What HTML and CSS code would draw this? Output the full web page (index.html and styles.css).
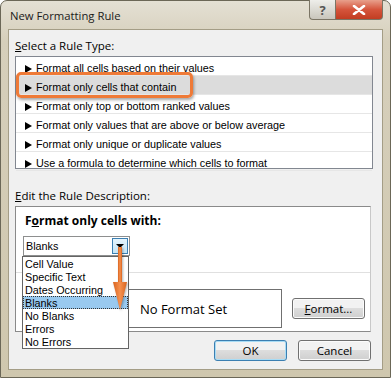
FILE: index.html
```html
<!DOCTYPE html>
<html lang="en">
<head>
    <meta charset="UTF-8">
    <title>New Formatting Rule</title>
    <link rel="stylesheet" href="styles.css">
</head>
<body>
    <div class="window">
        <div class="titlebar">
            <span class="title">New Formatting Rule</span>
            <div class="caption-btns">
                <span class="cap help">?</span>
                <span class="cap close">
                    <svg width="14" height="10" viewBox="0 0 14 10">
                        <path d="M2 1 L12 9 M12 1 L2 9" stroke="#fff" stroke-width="2.6" stroke-linecap="round"/>
                    </svg>
                </span>
            </div>
        </div>

        <div class="client">
            <div class="label"><u>S</u>elect a Rule Type:</div>
            <div class="rules">
                <div class="rule">Format all cells based on their values</div>
                <div class="rule selected">Format only cells that contain</div>
                <div class="rule">Format only top or bottom ranked values</div>
                <div class="rule">Format only values that are above or below average</div>
                <div class="rule">Format only unique or duplicate values</div>
                <div class="rule">Use a formula to determine which cells to format</div>
                <div class="callout"></div>
            </div>

            <div class="label label-gap"><u>E</u>dit the Rule Description:</div>
            <div class="desc">
                <div class="desc-top">
                    <div class="desc-title">F<u>o</u>rmat only cells with:</div>
                    <div class="combo">
                        <span>Blanks</span>
                        <span class="combo-btn"></span>
                    </div>
                </div>
                <div class="desc-bottom">
                    <div class="preview">No Format Set</div>
                    <button class="btn fmt"><u>F</u>ormat...</button>
                </div>

                <div class="popup">
                    <div class="opt">Cell Value</div>
                    <div class="opt">Specific Text</div>
                    <div class="opt">Dates Occurring</div>
                    <div class="opt active">Blanks</div>
                    <div class="opt">No Blanks</div>
                    <div class="opt">Errors</div>
                    <div class="opt">No Errors</div>
                </div>

                <svg class="arrow" width="20" height="76" viewBox="0 0 20 76">
                    <defs>
                        <linearGradient id="ar" x1="0" x2="1" y1="0" y2="0">
                            <stop offset="0" stop-color="#d9641f"/>
                            <stop offset="0.5" stop-color="#f6914f"/>
                            <stop offset="1" stop-color="#d9641f"/>
                        </linearGradient>
                    </defs>
                    <rect x="8" y="8" width="4" height="38" fill="url(#ar)"/>
                    <polygon points="3,43 17,43 10,71" fill="url(#ar)"/>
                </svg>
            </div>

            <div class="actions">
                <button class="btn ok">OK</button>
                <button class="btn">Cancel</button>
            </div>
        </div>
    </div>
</body>
</html>
```

FILE: styles.css
```css
body {
    margin: 0;
    background: #fff;
    font-family: 'Open Sans', 'Noto Sans', sans-serif;
    font-size: 11.5px;
    color: #000;
}
.window {
    width: 391px;
    height: 378px;
    box-sizing: border-box;
    border: 1px solid #6b6757;
    border-radius: 7px 7px 0 0;
    background: linear-gradient(#e4e0d4, #d6cfbb 40px, #cfc7ae);
    display: flex;
    flex-direction: column;
}
.titlebar {
    height: 29px;
    display: flex;
    justify-content: space-between;
    align-items: flex-start;
    padding: 0 7px 0 9px;
}
.title {
    margin-top: 6px;
    font-size: 11.3px;
    line-height: 18px;
    color: #1a1a1a;
}
.caption-btns {
    display: flex;
    margin-top: -1px;
}
.cap {
    height: 19px;
    display: flex;
    align-items: center;
    justify-content: center;
    border: 1px solid #7b7565;
    border-top: none;
}
.help {
    width: 25px;
    border-radius: 0 0 0 4px;
    background: linear-gradient(#eeeeea, #c9c6bc);
    color: #555;
    font-weight: bold;
    font-size: 13px;
    border-right: none;
}
.close {
    width: 46px;
    border-radius: 0 0 4px 0;
    background: linear-gradient(#e8a08c, #d5553c 50%, #c23d22);
}
.client {
    flex: 1;
    margin: 0 7px 7px 7px;
    border: 1px solid #a49d86;
    background: #f0f0f0;
    padding: 0 11px 8px 6px;
}
.label {
    margin-top: 8px;
    line-height: 16px;
}
.label-gap {
    margin-top: 19px;
}
.rules {
    position: relative;
    margin-top: 2px;
    margin-right: -2px;
    height: 113px;
    box-sizing: border-box;
    border: 1px solid #828790;
    background: #fff;
    font-family: 'Liberation Sans', Arial, sans-serif;
    font-size: 10.8px;
}
.rule {
    height: 18px;
    line-height: 23px;
    border-bottom: 1px solid #e6e6e6;
    padding-left: 20px;
    position: relative;
}
.rule::before {
    content: "";
    position: absolute;
    left: 9px;
    top: 8px;
    border-left: 7px solid #000;
    border-top: 4px solid transparent;
    border-bottom: 4px solid transparent;
}
.rule:last-of-type {
    border-bottom: none;
}
.rule.selected {
    background: #dcdcdc;
}
.callout {
    position: absolute;
    left: 0;
    top: 15px;
    width: 171px;
    height: 20px;
    border: 3px solid #ef7a37;
    border-radius: 5px;
    box-shadow: 1px 2px 3px rgba(0, 0, 0, 0.35);
}
.desc {
    position: relative;
    margin-top: 2px;
    height: 126px;
    box-sizing: border-box;
    border: 1px solid #8a8a8a;
    border-right-color: #c8c8c8;
    background: #fff;
}
.desc-top {
    height: 66px;
    border-bottom: 1px solid #e0e0e0;
    padding: 6px 0 0 7px;
    box-sizing: border-box;
}
.desc-title {
    font-weight: bold;
    font-size: 12px;
    line-height: 16px;
    padding-left: 2px;
}
.combo {
    margin-top: 7px;
    width: 107px;
    height: 20px;
    box-sizing: border-box;
    border: 1px solid #8e8f8f;
    display: flex;
    justify-content: space-between;
    align-items: center;
    padding: 0 1px 0 2px;
    font-family: 'Liberation Sans', Arial, sans-serif;
    font-size: 10.8px;
}
.combo-btn {
    width: 16px;
    height: 16px;
    box-sizing: border-box;
    border: 1px solid #3c7fb1;
    background: linear-gradient(#e5f4fc, #c4e5f6);
    position: relative;
}
.combo-btn::after {
    content: "";
    position: absolute;
    left: 3px;
    top: 5px;
    border-top: 4px solid #000;
    border-left: 4px solid transparent;
    border-right: 4px solid transparent;
}
.desc-bottom {
    display: flex;
    align-items: center;
    padding: 16px 0 0 69px;
}
.preview {
    width: 197px;
    height: 39px;
    box-sizing: border-box;
    border: 1px solid #707070;
    display: flex;
    align-items: center;
    justify-content: center;
    font-size: 13px;
}
.btn {
    font-family: 'Open Sans', 'Noto Sans', sans-serif;
    font-size: 11.5px;
    color: #000;
    width: 73px;
    height: 21px;
    padding: 0;
    border: 1px solid #707070;
    border-radius: 3px;
    background: linear-gradient(#f2f2f2 45%, #dddddd 50%, #cfcfcf);
    box-shadow: inset 0 0 0 1px #fbfbfb;
}
.fmt {
    margin-left: 10px;
}
.popup {
    position: absolute;
    left: 6px;
    top: 49px;
    width: 107px;
    box-sizing: border-box;
    border: 1px solid #646464;
    background: #fff;
    font-family: 'Liberation Sans', Arial, sans-serif;
    font-size: 10.8px;
}
.opt {
    height: 13px;
    line-height: 14px;
    padding-left: 2px;
}
.opt.active {
    background: #99c9ef;
    outline: 1px dotted #333;
    outline-offset: -1px;
}
.arrow {
    position: absolute;
    left: 94px;
    top: 32px;
    filter: drop-shadow(1px 1px 1px rgba(0, 0, 0, 0.3));
}
.actions {
    display: flex;
    justify-content: flex-end;
    gap: 11px;
    margin-top: 8px;
}
.ok {
    border-color: #3c7fb1;
    box-shadow: inset 0 0 0 1px #a8dcf5;
}
```
